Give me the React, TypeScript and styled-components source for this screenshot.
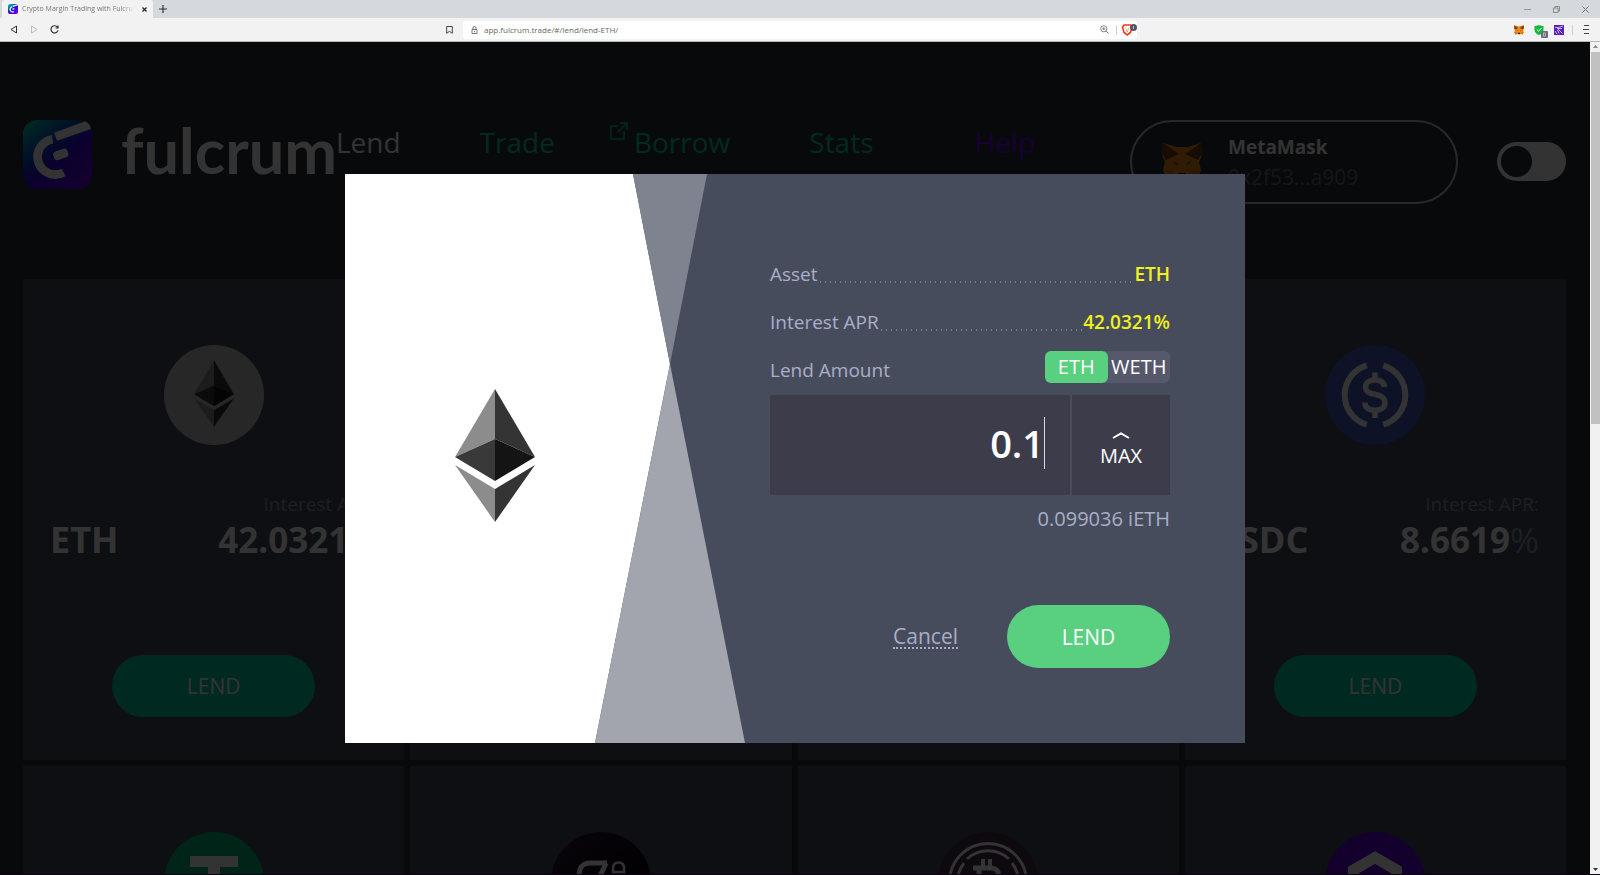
import React, { useState } from "react";
import styled, { createGlobalStyle } from "styled-components";

const GlobalStyle = createGlobalStyle`
  *, *::before, *::after { box-sizing: border-box; }
  body { margin: 0; font-family: "Open Sans", "Noto Sans", sans-serif; color: #fff; }
  button, input { font: inherit; color: inherit; border: 0; padding: 0; margin: 0; background: none; }
  button { cursor: pointer; }
  a { color: inherit; text-decoration: none; }
  svg { display: block; flex: none; }
`;

/* ---------- browser frame ---------- */

const Shell = styled.div`
  display: flex;
  flex-direction: column;
  height: 100vh;
  overflow: hidden;
  border-bottom: 1px solid #0c0410;
`;

const TabStrip = styled.div`
  display: flex;
  align-items: center;
  height: 18px;
  padding: 0 10px 0 2px;
  background: #d5d8dd;
  color: #333;
`;

const Tab = styled.div`
  display: flex;
  align-items: center;
  gap: 4px;
  width: 151px;
  height: 18px;
  padding: 0 4px 0 6px;
  background: #f2f2f2;
  border-radius: 2px 2px 0 0;
`;

const TabTitle = styled.span`
  flex: 1;
  overflow: hidden;
  white-space: nowrap;
  font-size: 7px;
  line-height: 10px;
  color: #777;
  mask-image: linear-gradient(90deg, #000 88%, transparent);
`;

const IconButton = styled.button`
  display: flex;
  align-items: center;
  justify-content: center;
  width: 10px;
  height: 12px;
`;

const NewTab = styled(IconButton)`
  margin-left: 5px;
`;

const WindowButtons = styled.div`
  display: flex;
  gap: 19px;
  margin-left: auto;
`;

const Toolbar = styled.div`
  display: grid;
  grid-template-columns: minmax(0, 1fr) minmax(0, 674px) minmax(0, 1fr);
  align-items: center;
  height: 24px;
  background: #f2f2f2;
  border-bottom: 1px solid #b9b9b9;
  color: #333;
`;

const ToolGroup = styled.div<{ $side: "left" | "right" }>`
  display: flex;
  align-items: center;
  gap: 10px;
  padding: ${(p) => (p.$side === "left" ? "0 9px" : "0 9px 0 0")};
  justify-content: ${(p) => (p.$side === "left" ? "flex-start" : "flex-end")};
`;

const Bookmark = styled(IconButton)`
  margin-left: auto;
`;

const AddressBar = styled.div`
  display: flex;
  align-items: center;
  gap: 5px;
  height: 18px;
  padding: 0 3px 0 6px;
  background: #fff;
  border-radius: 2px;
`;

const AddressInput = styled.input`
  flex: 1;
  min-width: 0;
  font-size: 8px;
  line-height: 12px;
  color: #666;
  outline: none;
`;

const Divider = styled.span<{ $tight?: boolean }>`
  width: 1px;
  height: 10px;
  margin: 0 ${(p) => (p.$tight ? "-2px" : "2px")};
  background: #cfcfcf;
`;

const Body = styled.div`
  display: flex;
  flex: 1;
  min-height: 0;
`;

const Scrollbar = styled.div`
  display: flex;
  flex-direction: column;
  align-items: center;
  width: 10px;
  padding: 3px 0;
  background: #f1f1f1;
`;

const Thumb = styled.div`
  width: 9px;
  height: 45%;
  margin: 3px 0 auto;
  background: #c1c1c1;
`;

/* ---------- page ---------- */

const Viewport = styled.div`
  position: relative;
  flex: 1;
  min-width: 0;
  overflow: hidden;
  background: #282d37;
`;

const Page = styled.main`
  padding: 78px 24px 0 23px;
`;

const Header = styled.header`
  display: flex;
  align-items: flex-start;
  height: 84px;
`;

const Brand = styled.a`
  display: flex;
  align-items: flex-start;
  gap: 29px;
  width: 313px;
`;

const BrandName = styled.span`
  font-family: Lato, sans-serif;
  font-weight: 700;
  font-size: 63px;
  line-height: 60px;
`;

const Nav = styled.nav`
  display: flex;
  gap: 79px;
  font-size: 28px;
  line-height: 44px;
`;

const NavLink = styled.a<{ $tone?: "plain" | "green" | "violet" }>`
  position: relative;
  color: ${(p) => (p.$tone === "plain" ? "#fff" : p.$tone === "violet" ? "#7300ff" : "#00cda5")};
  margin-left: ${(p) => (p.$tone === "violet" ? "22px" : "0")};
`;

const ExternalMark = styled.svg`
  position: absolute;
  left: -24px;
  top: 2px;
`;

const Wallet = styled.button`
  display: flex;
  align-items: center;
  gap: 26px;
  width: 328px;
  height: 84px;
  margin-left: auto;
  padding: 0 30px;
  border: 2px solid #c8c8cc;
  border-radius: 42px;
  text-align: left;
`;

const WalletText = styled.span`
  display: flex;
  flex-direction: column;
  line-height: 30px;
`;

const WalletName = styled.strong`
  font-size: 19px;
  font-weight: 700;
`;

const WalletAddress = styled.span`
  font-size: 21px;
  color: #686e8a;
`;

const ThemeSwitch = styled.input`
  appearance: none;
  display: flex;
  align-items: center;
  width: 69px;
  height: 39px;
  margin: 22px 0 0 39px;
  padding: 0 4px;
  border-radius: 20px;
  background: #fff;
  cursor: pointer;
  &::before {
    content: "";
    width: 31px;
    height: 31px;
    border-radius: 50%;
    background: #282d37;
  }
  &:checked {
    justify-content: flex-end;
  }
`;

const CardGrid = styled.section`
  display: grid;
  grid-template-columns: repeat(4, minmax(0, 1fr));
  gap: 6px;
  margin-top: 75px;
`;

const Card = styled.article`
  display: flex;
  flex-direction: column;
  align-items: center;
  min-height: 481px;
  padding: 66px 27px 43px;
  background: #464b5b;
`;

const CardInfo = styled.div`
  display: flex;
  align-items: flex-end;
  justify-content: space-between;
  align-self: stretch;
  margin-top: 46px;
`;

const Ticker = styled.h2`
  margin: 0;
  font-size: 36px;
  line-height: 46px;
  font-weight: 700;
`;

const Rate = styled.div`
  text-align: right;
`;

const RateLabel = styled.div`
  font-size: 19px;
  line-height: 26px;
  color: #9095a6;
`;

const RateValue = styled.div`
  font-size: 35px;
  line-height: 46px;
  font-weight: 700;
  span {
    font-weight: 400;
    color: #9095a6;
  }
`;

const PillButton = styled.button<{ $size: "card" | "dialog" }>`
  width: ${(p) => (p.$size === "card" ? "203px" : "163px")};
  height: ${(p) => (p.$size === "card" ? "62px" : "63px")};
  margin-top: ${(p) => (p.$size === "card" ? "92px" : "0")};
  border-radius: 32px;
  background: ${(p) => (p.$size === "card" ? "#00cda5" : "#59cf80")};
  font-size: 21px;
  line-height: 28px;
`;

/* ---------- dialog ---------- */

const Backdrop = styled.div`
  position: absolute;
  inset: 0;
  display: flex;
  align-items: center;
  justify-content: center;
  padding-top: 1px;
  background: rgba(0, 0, 0, 0.8);
`;

const Dialog = styled.form`
  display: grid;
  grid-template-columns: 425px minmax(0, 1fr);
  width: 900px;
  max-width: 100%;
  background: #474c5c;
`;

const Art = styled.div`
  position: relative;
  display: flex;
  align-items: center;
  padding-left: 110px;
`;

const ArtShapes = styled.svg`
  position: absolute;
  inset: 0;
  width: 100%;
  height: 100%;
`;

const ArtLogo = styled.div`
  position: relative;
`;

const Fields = styled.div`
  display: flex;
  flex-direction: column;
  padding: 87px 75px 75px 0;
  font-size: 19px;
  line-height: 26px;
  color: #a9aec9;
`;

const InfoRow = styled.div`
  display: flex;
  margin-bottom: 22px;
`;

const Leader = styled.span`
  flex: 1;
  height: 2px;
  margin-top: 20px;
  background: radial-gradient(circle, #787c90 1px, transparent 1px) 0 0 / 5px 2px;
`;

const InfoValue = styled.span`
  font-weight: 600;
  color: #f0f01c;
`;

const AmountHead = styled.div`
  display: flex;
  align-items: flex-end;
  justify-content: space-between;
  margin-top: -6px;
`;

const Segments = styled.div`
  display: grid;
  grid-template-columns: 1fr 1fr;
  width: 125px;
  height: 32px;
  border-radius: 6px;
  background: #56586b;
`;

const Segment = styled.label<{ $active: boolean }>`
  display: flex;
  align-items: center;
  justify-content: center;
  border-radius: 6px;
  background: ${(p) => (p.$active ? "#59cf80" : "transparent")};
  font-size: 20px;
  color: #fff;
  cursor: pointer;
  input {
    position: absolute;
    opacity: 0;
    width: 1px;
    height: 1px;
  }
`;

const AmountBox = styled.div`
  display: grid;
  grid-template-columns: minmax(0, 1fr) 98px;
  gap: 2px;
  height: 100px;
  margin-top: 12px;
`;

const AmountField = styled.div`
  display: flex;
  align-items: center;
  padding: 0 25px 4px 0;
  background: #3c3c4a;
`;

const AmountInput = styled.input`
  flex: 1;
  min-width: 0;
  text-align: right;
  font-size: 38px;
  line-height: 52px;
  font-weight: 600;
  color: #fff;
  outline: none;
`;

const Caret = styled.span`
  width: 1px;
  height: 52px;
  background: #d8d8de;
`;

const MaxButton = styled.button`
  display: flex;
  flex-direction: column;
  align-items: center;
  justify-content: center;
  gap: 4px;
  padding-top: 10px;
  background: #3c3c4a;
  color: #fff;
  font-size: 20px;
  line-height: 26px;
`;

const Receive = styled.output`
  margin-top: 11px;
  text-align: right;
  font-size: 20px;
`;

const Actions = styled.div`
  display: flex;
  align-items: center;
  justify-content: flex-end;
  gap: 49px;
  margin-top: 73px;
  color: #fff;
`;

const CancelButton = styled.button`
  font-size: 21px;
  line-height: 22px;
  color: #a9aec9;
  border-bottom: 2px dotted #a9aec9;
`;

/* ---------- drawings ---------- */

const FulcrumMark = ({ size, id }: { size: number; id: string }) => (
  <svg width={size} height={size} viewBox="0 0 69 69">
    <defs>
      <linearGradient id={id} x1="0" y1="0" x2="0.8" y2="1">
        <stop offset="0" stopColor="#00e0a8" />
        <stop offset="0.42" stopColor="#0a3cc8" />
        <stop offset="0.62" stopColor="#3c00e6" />
        <stop offset="1" stopColor="#6400e6" />
      </linearGradient>
    </defs>
    <rect width="69" height="69" rx="14" fill={`url(#${id})`} />
    <path d="M29.5 19.2A17.8 17.8 0 1 0 40.7 52.5" fill="none" stroke="#fff" strokeWidth="8.7" />
    <path d="M31 12.7 62 1.3Q67 3.5 68 9L34 20.7Z" fill="#fff" />
    <rect x="30.3" y="29.9" width="15" height="9" rx="3.5" fill="#fff" transform="rotate(-20 37.8 34.4)" />
  </svg>
);

const Fox = ({ size }: { size: number }) => (
  <svg width={size} height={size} viewBox="0 0 40 40">
    <path d="M1 1 15 5H25L39 1 39.500 14 37 20 39 28 35 38 26 35 23 38H17L14 35 5 38 1 28 3 20 .5 14Z" fill="#f08a1c" />
    <path d="M1 1 17 12 4 18 1 13ZM39 1 23 12 36 18 39 13Z" fill="#763d16" />
    <path d="M10 19 16 21 15 24ZM30 19 24 21 25 24Z" fill="#8a4a10" />
    <path d="M1 28H11L16 34 5 38ZM39 28H29L24 34 35 38Z" fill="#e2761b" />
    <path d="M16.500 31H23.500V36H16.500Z" fill="#161616" />
  </svg>
);

const EthDiamond = ({ width }: { width: number }) => (
  <svg width={width} height={Math.round(width * 1.7375)} viewBox="0 0 80 139">
    <path d="M40 0 0 68 40 50Z" fill="#8c8c8c" />
    <path d="M40 0 80 68 40 50Z" fill="#343434" />
    <path d="M0 68 40 50V92Z" fill="#393939" />
    <path d="M80 68 40 50V92Z" fill="#141414" />
    <path d="M0 76 40 100V133Z" fill="#8c8c8c" />
    <path d="M80 76 40 100V133Z" fill="#343434" />
  </svg>
);

const Coin = styled.div<{ $fill: string }>`
  display: flex;
  align-items: center;
  justify-content: center;
  width: 100px;
  height: 100px;
  border-radius: 50%;
  background: ${(p) => p.$fill};
`;

const UsdcGlyph = () => (
  <svg width="100" height="100" viewBox="0 0 100 100" fill="none" stroke="#fff" strokeWidth="6">
    <path d="M41.800 20.300A31 31 0 0 0 41.800 79.700M58.200 20.300A31 31 0 0 1 58.200 79.700" />
    <path
      d="M59.500 42C59 37 55.500 35 50 35 44 35 40.500 37.800 40.500 42 40.500 46.500 43.500 48.200 50 49.300 56.500 50.500 60 52.500 60 57.500 60 62.500 56 65.300 50 65.300 43.500 65.300 40 62.500 39.800 57.500M50 27.500V35M50 65V73"
      strokeWidth="5.500"
    />
  </svg>
);

const UsdtGlyph = () => (
  <svg width="100" height="100" viewBox="0 0 100 100" fill="#fff">
    <path d="M26 24H74V35H56V44C70 45 78 47 78 50S68 56 56 56V80H44V56C32 56 22 53 22 50S30 45 44 44V35H26Z" />
  </svg>
);

const SaiGlyph = () => (
  <svg width="100" height="100" viewBox="0 0 100 100" fill="none" stroke="#fff">
    <path d="M56 31H40C29 31 28 38 28 45V60C28 70 33 72 42 72M55 31Q54 34 43 56" strokeWidth="5" />
    <path d="M62 40H73V36C73 32 70.500 30.500 67.500 30.500S62 32 62 36Z" strokeWidth="2.500" />
  </svg>
);

const WbtcGlyph = () => (
  <svg width="100" height="100" viewBox="0 0 100 100" fill="none" stroke="#fff">
    <circle cx="50" cy="50" r="38.500" strokeWidth="3" />
    <path d="M29 27A31 31 0 0 1 71 27M26 31A31 31 0 0 0 26 69M74 31A31 31 0 0 1 74 69" strokeWidth="3" />
    <path d="M35 36H53C63 36 63 49 53 49H42M41 36V64H55C65 64 65 49 53 49" strokeWidth="5" />
    <path d="M45 27V36M52 27V36M45 64V72M52 64V72" strokeWidth="4" />
  </svg>
);

const LinkGlyph = () => (
  <svg width="100" height="100" viewBox="0 0 100 100" fill="none">
    <path d="M50 25.500 71.500 38V62L50 74.500 28.500 62V38Z" stroke="#fff" strokeWidth="11" />
  </svg>
);

interface Market {
  id: string;
  fill: string;
  glyph: React.ReactNode;
  ticker?: string;
  rate?: string;
}

const MARKETS: (Market | null)[] = [
  { id: "eth", fill: "#c4c4c4", glyph: <EthDiamond width={40} />, ticker: "ETH", rate: "42.0321" },
  null,
  null,
  { id: "usdc", fill: "#4159be", glyph: <UsdcGlyph />, ticker: "USDC", rate: "8.6619" },
  { id: "usdt", fill: "#00b478", glyph: <UsdtGlyph /> },
  { id: "sai", fill: "linear-gradient(135deg, #32193c, #0a0410 60%)", glyph: <SaiGlyph /> },
  { id: "wbtc", fill: "#46284b", glyph: <WbtcGlyph /> },
  { id: "link", fill: "#5f00e1", glyph: <LinkGlyph /> },
];

const BrowserFrame = () => (
  <>
    <TabStrip>
      <Tab>
        <FulcrumMark size={10} id="tabMark" />
        <TabTitle>Crypto Margin Trading with Fulcru</TabTitle>
        <IconButton aria-label="Close tab">
          <svg width="5" height="5" viewBox="0 0 5 5" stroke="#222" strokeWidth="1.200">
            <path d="M.5 .5 4.500 4.500M4.500 .5 .5 4.500" />
          </svg>
        </IconButton>
      </Tab>
      <NewTab aria-label="New tab">
        <svg width="8" height="8" viewBox="0 0 8 8" stroke="#333" strokeWidth="1.200">
          <path d="M4 0V8M0 4H8" />
        </svg>
      </NewTab>
      <WindowButtons>
        <IconButton aria-label="Minimize">
          <svg width="7" height="7" viewBox="0 0 7 7" stroke="#999"><path d="M0 3.500H7" /></svg>
        </IconButton>
        <IconButton aria-label="Restore">
          <svg width="7" height="7" viewBox="0 0 7 7" fill="none" stroke="#777" strokeWidth=".8">
            <path d="M.5 2H5V6.500H.5ZM2 2V.5H6.500V5H5" />
          </svg>
        </IconButton>
        <IconButton aria-label="Close window">
          <svg width="7" height="7" viewBox="0 0 7 7" stroke="#666" strokeWidth=".8"><path d="M.3 .3 6.700 6.700M6.700 .3 .3 6.700" /></svg>
        </IconButton>
      </WindowButtons>
    </TabStrip>
    <Toolbar>
      <ToolGroup $side="left">
        <IconButton aria-label="Back">
          <svg width="8" height="9" viewBox="0 0 8 9" fill="none" stroke="#333"><path d="M6.500 1V8L1 4.500Z" /></svg>
        </IconButton>
        <IconButton aria-label="Forward">
          <svg width="8" height="9" viewBox="0 0 8 9" fill="none" stroke="#bbb"><path d="M1.500 1V8L7 4.500Z" /></svg>
        </IconButton>
        <IconButton aria-label="Reload">
          <svg width="9" height="9" viewBox="0 0 9 9" fill="none" stroke="#333" strokeWidth="1.200">
            <path d="M7.500 2.200A3.600 3.600 0 1 0 8 5.500M8 .5V3H5.500" />
          </svg>
        </IconButton>
        <Bookmark aria-label="Bookmark this page">
          <svg width="7" height="8" viewBox="0 0 7 8" fill="none" stroke="#444"><path d="M.7 .5H6.300V7.300L3.500 5.300 .7 7.300Z" /></svg>
        </Bookmark>
      </ToolGroup>
      <AddressBar>
        <IconButton aria-label="Site information">
          <svg width="7" height="8" viewBox="0 0 7 8" fill="none" stroke="#555" strokeWidth=".8">
            <path d="M1 3.500H6V7.500H1ZM2 3.500V2A1.500 1.500 0 0 1 5 2V3.500M3.500 5V6.200" />
          </svg>
        </IconButton>
        <AddressInput aria-label="Address" defaultValue="app.fulcrum.trade/#/lend/lend-ETH/" />
        <IconButton aria-label="Zoom">
          <svg width="9" height="9" viewBox="0 0 9 9" fill="none" stroke="#666" strokeWidth=".8">
            <circle cx="3.800" cy="3.800" r="3.100" />
            <path d="M6 6 8.500 8.500M2.300 3.800H5.300M3.800 2.300V5.300" />
          </svg>
        </IconButton>
        <Divider />
        <IconButton aria-label="Shields">
          <svg width="15" height="12" viewBox="0 0 15 12" overflow="visible">
            <path d="M2 1H8.500L10 3 8.500 8.500 5.200 11 2 8.500 .5 3Z" fill="#fff" stroke="#f03a1c" strokeWidth="1.600" />
            <path d="M3.500 3.500 5.200 8 7 3.500" fill="none" stroke="#f58a70" strokeWidth=".8" />
            <circle cx="11.500" cy="3.500" r="3.500" fill="#555466" />
            <path d="M11.500 2V5" stroke="#ddd" strokeWidth=".8" />
          </svg>
        </IconButton>
      </AddressBar>
      <ToolGroup $side="right">
        <IconButton aria-label="MetaMask extension"><Fox size={10} /></IconButton>
        <IconButton aria-label="Security extension">
          <svg width="10" height="10" viewBox="0 0 10 10" overflow="visible">
            <path d="M.5 1Q3 1 5 0 7 1 9.500 1V5Q9 8.500 5 10 1 8.500 .5 5Z" fill="#12b93c" />
            <path d="M2.800 4.500 4.500 6.200 7.500 3" fill="none" stroke="#fff" />
            <rect x="7" y="6" width="7" height="7" rx="1" fill="#6c6a7c" />
            <rect x="9.500" y="8" width="2" height="3" fill="none" stroke="#ddd" strokeWidth=".6" />
          </svg>
        </IconButton>
        <IconButton aria-label="Price extension">
          <svg width="10" height="10" viewBox="0 0 10 10">
            <rect width="10" height="10" fill="#5a1fb8" />
            <path d="M1 2.500H4L9 1M3 3.500H8M4 4 8.500 8.500M3.500 5 5 8.500M1 6 3 9" stroke="#e8dcff" strokeWidth=".8" />
          </svg>
        </IconButton>
        <Divider $tight />
        <IconButton aria-label="Menu">
          <svg width="7" height="9" viewBox="0 0 7 9" stroke="#444"><path d="M1 .5H6M0 4.500H6M1 8.500H6" /></svg>
        </IconButton>
      </ToolGroup>
    </Toolbar>
  </>
);

const LendDialog = () => {
  const [amount, setAmount] = useState("0.1");
  const [asset, setAsset] = useState("ETH");
  return (
    <Backdrop>
      <Dialog role="dialog" aria-label="Lend ETH" onSubmit={(e) => e.preventDefault()}>
        <Art>
          <ArtShapes viewBox="0 0 425 569" preserveAspectRatio="none">
            <path d="M0 0H288L325 190 250 569H0Z" fill="#fff" />
            <path d="M288 0H362L325 190Z" fill="#7f828f" />
            <path d="M325 190 400 569H250Z" fill="#a2a5ae" />
          </ArtShapes>
          <ArtLogo>
            <EthDiamond width={80} />
          </ArtLogo>
        </Art>
        <Fields>
          <InfoRow>
            <span>Asset</span>
            <Leader />
            <InfoValue>ETH</InfoValue>
          </InfoRow>
          <InfoRow>
            <span>Interest APR</span>
            <Leader />
            <InfoValue>42.0321%</InfoValue>
          </InfoRow>
          <AmountHead>
            <label htmlFor="lend-amount">Lend Amount</label>
            <Segments role="radiogroup" aria-label="Asset to lend">
              {["ETH", "WETH"].map((name) => (
                <Segment key={name} $active={asset === name}>
                  <input type="radio" name="asset" checked={asset === name} onChange={() => setAsset(name)} />
                  {name}
                </Segment>
              ))}
            </Segments>
          </AmountHead>
          <AmountBox>
            <AmountField>
              <AmountInput id="lend-amount" value={amount} onChange={(e) => setAmount(e.target.value)} />
              <Caret />
            </AmountField>
            <MaxButton type="button">
              <svg width="18" height="7" viewBox="0 0 18 7" fill="none" stroke="#fff" strokeWidth="2">
                <path d="M1 6 9 1.500 17 6" />
              </svg>
              MAX
            </MaxButton>
          </AmountBox>
          <Receive htmlFor="lend-amount">0.099036 iETH</Receive>
          <Actions>
            <CancelButton type="button">Cancel</CancelButton>
            <PillButton type="submit" $size="dialog">LEND</PillButton>
          </Actions>
        </Fields>
      </Dialog>
    </Backdrop>
  );
};

export default function App() {
  return (
    <>
      <GlobalStyle />
      <Shell>
        <BrowserFrame />
        <Body>
          <Viewport>
            <Page>
              <Header>
                <Brand href="#/">
                  <FulcrumMark size={69} id="brandMark" />
                  <BrandName>fulcrum</BrandName>
                </Brand>
                <Nav>
                  <NavLink href="#/lend" $tone="plain">Lend</NavLink>
                  <NavLink href="#/trade">Trade</NavLink>
                  <NavLink href="#/borrow">
                    <ExternalMark width="18" height="18" viewBox="0 0 18 18" fill="none" stroke="currentColor" strokeWidth="1.500">
                      <path d="M8 4H1V17H14V9M10 1H17V8M17 1 8 10" />
                    </ExternalMark>
                    Borrow
                  </NavLink>
                  <NavLink href="#/stats">Stats</NavLink>
                  <NavLink href="#/help" $tone="violet">Help</NavLink>
                </Nav>
                <Wallet>
                  <Fox size={40} />
                  <WalletText>
                    <WalletName>MetaMask</WalletName>
                    <WalletAddress>0x2f53...a909</WalletAddress>
                  </WalletText>
                </Wallet>
                <ThemeSwitch type="checkbox" aria-label="Light theme" />
              </Header>
              <CardGrid>
                {MARKETS.map((m, i) => (
                  <Card key={m ? m.id : i}>
                    {m && <Coin $fill={m.fill}>{m.glyph}</Coin>}
                    {m && m.ticker && (
                      <>
                        <CardInfo>
                          <Ticker>{m.ticker}</Ticker>
                          <Rate>
                            <RateLabel>Interest APR:</RateLabel>
                            <RateValue>{m.rate}<span>%</span></RateValue>
                          </Rate>
                        </CardInfo>
                        <PillButton $size="card">LEND</PillButton>
                      </>
                    )}
                  </Card>
                ))}
              </CardGrid>
            </Page>
            <LendDialog />
          </Viewport>
          <Scrollbar>
            <svg width="5" height="4" viewBox="0 0 5 4" fill="#888"><path d="M2.500 0 5 3H0Z" /></svg>
            <Thumb />
            <svg width="5" height="4" viewBox="0 0 5 4" fill="#333"><path d="M2.500 4 5 1H0Z" /></svg>
          </Scrollbar>
        </Body>
      </Shell>
    </>
  );
}
